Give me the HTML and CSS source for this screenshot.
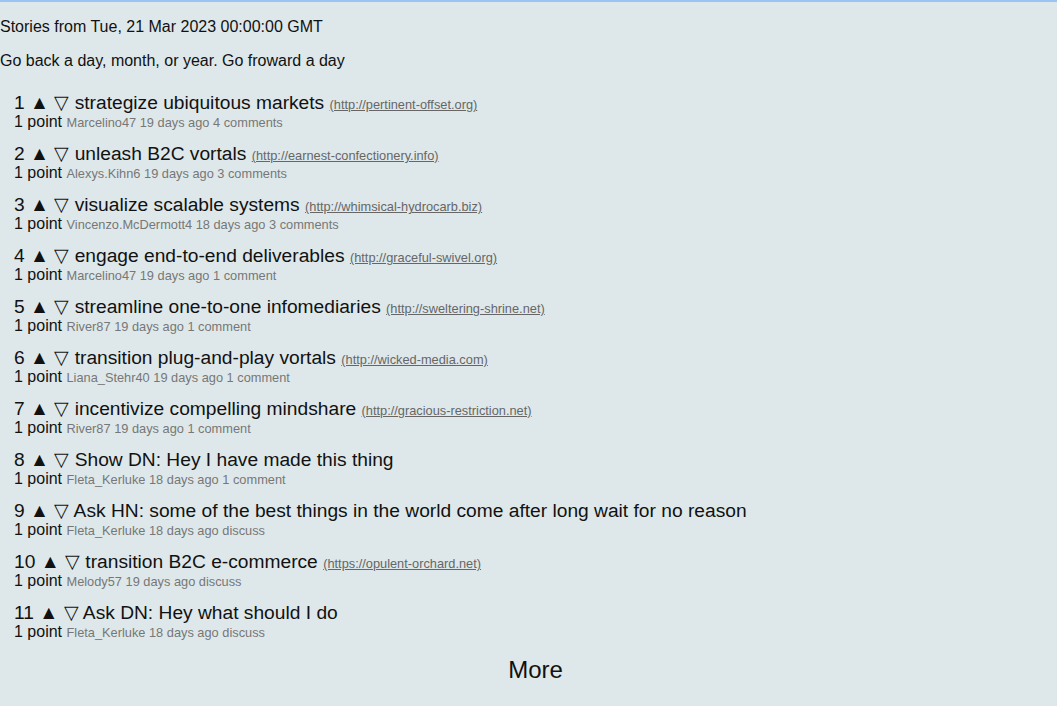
FILE: index.html
```html
<!DOCTYPE html>
<html>
<head>
<meta charset="utf-8">
<link rel="stylesheet" href="styles.css">
</head>
<body>
<div class="page">
  <p class="date">Stories from Tue, 21 Mar 2023 00:00:00 GMT</p>
  <p class="nav">Go back a day, month, or year. Go froward a day</p>
  <div class="stories">
    <div class="story">
      <div class="title-line">1 ▲ ▽ <span class="title">strategize ubiquitous markets</span> <a class="url" href="#">(http://pertinent-offset.org)</a></div>
      <div class="meta-line">1 point <span class="meta">Marcelino47 19 days ago 4 comments</span></div>
    </div>
    <div class="story">
      <div class="title-line">2 ▲ ▽ <span class="title">unleash B2C vortals</span> <a class="url" href="#">(http://earnest-confectionery.info)</a></div>
      <div class="meta-line">1 point <span class="meta">Alexys.Kihn6 19 days ago 3 comments</span></div>
    </div>
    <div class="story">
      <div class="title-line">3 ▲ ▽ <span class="title">visualize scalable systems</span> <a class="url" href="#">(http://whimsical-hydrocarb.biz)</a></div>
      <div class="meta-line">1 point <span class="meta">Vincenzo.McDermott4 18 days ago 3 comments</span></div>
    </div>
    <div class="story">
      <div class="title-line">4 ▲ ▽ <span class="title">engage end-to-end deliverables</span> <a class="url" href="#">(http://graceful-swivel.org)</a></div>
      <div class="meta-line">1 point <span class="meta">Marcelino47 19 days ago 1 comment</span></div>
    </div>
    <div class="story">
      <div class="title-line">5 ▲ ▽ <span class="title">streamline one-to-one infomediaries</span> <a class="url" href="#">(http://sweltering-shrine.net)</a></div>
      <div class="meta-line">1 point <span class="meta">River87 19 days ago 1 comment</span></div>
    </div>
    <div class="story">
      <div class="title-line">6 ▲ ▽ <span class="title">transition plug-and-play vortals</span> <a class="url" href="#">(http://wicked-media.com)</a></div>
      <div class="meta-line">1 point <span class="meta">Liana_Stehr40 19 days ago 1 comment</span></div>
    </div>
    <div class="story">
      <div class="title-line">7 ▲ ▽ <span class="title">incentivize compelling mindshare</span> <a class="url" href="#">(http://gracious-restriction.net)</a></div>
      <div class="meta-line">1 point <span class="meta">River87 19 days ago 1 comment</span></div>
    </div>
    <div class="story">
      <div class="title-line">8 ▲ ▽ <span class="title">Show DN: Hey I have made this thing</span></div>
      <div class="meta-line">1 point <span class="meta">Fleta_Kerluke 18 days ago 1 comment</span></div>
    </div>
    <div class="story">
      <div class="title-line">9 ▲ ▽ <span class="title">Ask HN: some of the best things in the world come after long wait for no reason</span></div>
      <div class="meta-line">1 point <span class="meta">Fleta_Kerluke 18 days ago discuss</span></div>
    </div>
    <div class="story">
      <div class="title-line">10 ▲ ▽ <span class="title">transition B2C e-commerce</span> <a class="url" href="#">(https://opulent-orchard.net)</a></div>
      <div class="meta-line">1 point <span class="meta">Melody57 19 days ago discuss</span></div>
    </div>
    <div class="story">
      <div class="title-line">11 ▲ ▽ <span class="title">Ask DN: Hey what should I do</span></div>
      <div class="meta-line">1 point <span class="meta">Fleta_Kerluke 18 days ago discuss</span></div>
    </div>
    <div class="more">More</div>
  </div>
</div>
</body>
</html>
```

FILE: styles.css
```css
html, body {
  margin: 0;
  padding: 0;
  background: #dee8ea;
}
body {
  font-family: "Liberation Sans", Arial, sans-serif;
  color: #111;
  font-size: 16px;
  border-top: 2px solid #9bc3f4;
  min-height: 704px;
}
.page p {
  margin: 16px 0;
  line-height: 18px;
}
.stories {
  display: flex;
  flex-direction: column;
  gap: 12px;
  padding: 6px 0 0 14px;
}
.title-line {
  font-size: 19.2px;
  line-height: 21px;
  height: 21px;
  white-space: nowrap;
}
.url {
  font-size: 12.8px;
  line-height: 1;
  color: #666;
  text-decoration: underline;
}
.meta-line {
  font-size: 16px;
  line-height: 18px;
  height: 18px;
}
.meta {
  font-size: 12.8px;
  line-height: 1;
  color: #777;
}
.more {
  text-align: center;
  font-size: 24px;
  line-height: 28px;
  margin-top: 3px;
}
```
